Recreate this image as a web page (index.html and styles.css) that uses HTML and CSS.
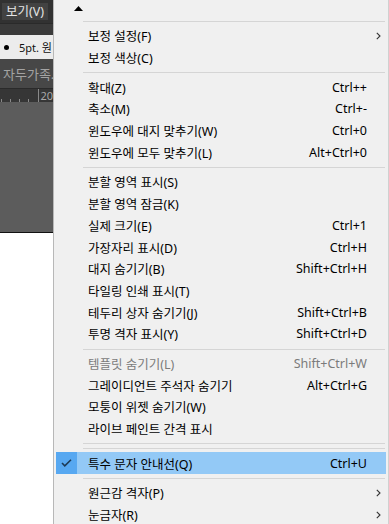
FILE: index.html
```html
<!DOCTYPE html>
<html lang="ko">
<head>
  <meta charset="UTF-8">
  <meta name="viewport" content="width=device-width, initial-scale=1.0">
  <link rel="stylesheet" href="styles.css">
</head>
<body>

<div class="screen">
  <!-- app behind the menu -->
  <div class="app">
    <div class="menubar"><span class="menubar-item">보기(V)</span></div>
    <div class="strip"></div>
    <div class="ctrl-row"><span class="dot"></span><span class="ctrl-text">5pt. 원</span></div>
    <div class="doc-tab">자두가족.</div>
    <div class="ruler">
      <span class="tick"></span>
      <span class="tick"></span>
      <span class="tick"></span>
      <span class="tick"></span>
      <span class="tick big"></span>
      <span class="ruler-num">20</span>
    </div>
    <div class="canvas"></div>
    <div class="paper"></div>
  </div>

  <!-- view menu -->
  <div class="menu">
    <div class="scroll-up">
      <svg width="9" height="5" viewBox="0 0 9 5"><polygon points="0,5 4.5,0 9,5" fill="#000"/></svg>
    </div>
    <div class="sep"></div>

    <div class="item"><span class="check"></span><span class="label">보정 설정(F)</span><span class="key"></span><span class="sub"><svg width="5" height="8" viewBox="0 0 5 8"><polyline points="0.8,0.8 4,4 0.8,7.2" fill="none" stroke="#333" stroke-width="1.1"/></svg></span></div>
    <div class="item"><span class="check"></span><span class="label">보정 색상(C)</span><span class="key"></span><span class="sub"></span></div>
    <div class="sep"></div>

    <div class="item"><span class="check"></span><span class="label">확대(Z)</span><span class="key">Ctrl++</span><span class="sub"></span></div>
    <div class="item"><span class="check"></span><span class="label">축소(M)</span><span class="key">Ctrl+-</span><span class="sub"></span></div>
    <div class="item"><span class="check"></span><span class="label">윈도우에 대지 맞추기(W)</span><span class="key">Ctrl+0</span><span class="sub"></span></div>
    <div class="item"><span class="check"></span><span class="label">윈도우에 모두 맞추기(L)</span><span class="key">Alt+Ctrl+0</span><span class="sub"></span></div>
    <div class="sep"></div>

    <div class="item"><span class="check"></span><span class="label">분할 영역 표시(S)</span><span class="key"></span><span class="sub"></span></div>
    <div class="item"><span class="check"></span><span class="label">분할 영역 잠금(K)</span><span class="key"></span><span class="sub"></span></div>
    <div class="item"><span class="check"></span><span class="label">실제 크기(E)</span><span class="key">Ctrl+1</span><span class="sub"></span></div>
    <div class="item"><span class="check"></span><span class="label">가장자리 표시(D)</span><span class="key">Ctrl+H</span><span class="sub"></span></div>
    <div class="item"><span class="check"></span><span class="label">대지 숨기기(B)</span><span class="key">Shift+Ctrl+H</span><span class="sub"></span></div>
    <div class="item"><span class="check"></span><span class="label">타일링 인쇄 표시(T)</span><span class="key"></span><span class="sub"></span></div>
    <div class="item"><span class="check"></span><span class="label">테두리 상자 숨기기(J)</span><span class="key">Shift+Ctrl+B</span><span class="sub"></span></div>
    <div class="item"><span class="check"></span><span class="label">투명 격자 표시(Y)</span><span class="key">Shift+Ctrl+D</span><span class="sub"></span></div>
    <div class="sep"></div>

    <div class="item disabled"><span class="check"></span><span class="label">템플릿 숨기기(L)</span><span class="key">Shift+Ctrl+W</span><span class="sub"></span></div>
    <div class="item"><span class="check"></span><span class="label">그레이디언트 주석자 숨기기</span><span class="key">Alt+Ctrl+G</span><span class="sub"></span></div>
    <div class="item"><span class="check"></span><span class="label">모퉁이 위젯 숨기기(W)</span><span class="key"></span><span class="sub"></span></div>
    <div class="item"><span class="check"></span><span class="label">라이브 페인트 간격 표시</span><span class="key"></span><span class="sub"></span></div>
    <div class="sep"></div>
    <div class="sep"></div>

    <div class="item checked"><span class="check"><svg width="11" height="8" viewBox="0 0 11 8"><polyline points="1,4 3.8,6.8 10,0.8" fill="none" stroke="#1d3a56" stroke-width="1.6"/></svg></span><span class="label">특수 문자 안내선(Q)</span><span class="key">Ctrl+U</span><span class="sub"></span></div>
    <div class="sep"></div>

    <div class="item"><span class="check"></span><span class="label">원근감 격자(P)</span><span class="key"></span><span class="sub"><svg width="5" height="8" viewBox="0 0 5 8"><polyline points="0.8,0.8 4,4 0.8,7.2" fill="none" stroke="#333" stroke-width="1.1"/></svg></span></div>
    <div class="item"><span class="check"></span><span class="label">눈금자(R)</span><span class="key"></span><span class="sub"><svg width="5" height="8" viewBox="0 0 5 8"><polyline points="0.8,0.8 4,4 0.8,7.2" fill="none" stroke="#333" stroke-width="1.1"/></svg></span></div>
  </div>
</div>

</body>
</html>
```

FILE: styles.css
```css
body {
  margin: 0;
  font-family: "Noto Sans", "Noto Sans CJK KR", sans-serif;
  background: #fff;
  overflow: hidden;
}

.screen {
  display: flex;
  width: 389px;
  height: 524px;
  overflow: hidden;
}

/* app area on the left */
.app {
  width: 53px;
  flex-shrink: 0;
  display: flex;
  flex-direction: column;
  overflow: hidden;
  white-space: nowrap;
}

.menubar {
  height: 23px;
  background-color: #323232;
  display: flex;
  align-items: center;
}

.menubar-item {
  margin-left: 2px;
  padding: 0 4px;
  height: 17px;
  line-height: 17px;
  background-color: #424242;
  color: #e4e4e4;
  font-size: 12.5px;
}

.strip {
  height: 11px;
  background-color: #3a3a3a;
  border-top: 1px solid #2a2a2a;
}

.ctrl-row {
  height: 24px;
  background-color: #ececec;
  display: flex;
  align-items: center;
  color: #111;
  font-size: 11px;
}

.dot {
  width: 5px;
  height: 5px;
  border-radius: 50%;
  background-color: #000;
  margin: 0 10px 0 4px;
}

.doc-tab {
  height: 29px;
  background-color: #474747;
  color: #a3a3a3;
  font-size: 13px;
  line-height: 31px;
  padding-left: 3px;
}

.ruler {
  height: 13px;
  background-color: #363636;
  border-top: 1px solid #2a2a2a;
  display: flex;
  align-items: flex-end;
  color: #a8a8a8;
  font-size: 11px;
}

.tick {
  width: 1px;
  height: 3px;
  background-color: #8a8a8a;
  margin-right: 9px;
}

.tick:first-child {
  margin-left: 1px;
}

.tick.big {
  height: 13px;
  margin-left: 1px;
  margin-right: 2px;
}

.ruler-num {
  line-height: 12px;
}

.canvas {
  height: 130px;
  background-color: #5c5c5c;
  border-bottom: 1px solid #111;
}

.paper {
  flex: 1;
  background-color: #fff;
}

/* menu */
.menu {
  flex: 1;
  background-color: #f0f0f0;
  border-left: 1px solid #b8b8b8;
  border-right: 1px solid #d0d0d0;
  font-size: 12.5px;
  color: #000;
}

.scroll-up {
  height: 17px;
  padding-left: 20px;
  display: flex;
  align-items: center;
}

.sep {
  height: 1px;
  margin: 4px 3px 3px 29px;
  background-color: #d5d5d5;
}

.item {
  height: 21.7px;
  margin: 0 2px;
  display: grid;
  grid-template-columns: 22px 1fr auto 19px;
  align-items: center;
}

.check {
  height: 100%;
  display: flex;
  align-items: center;
  justify-content: center;
}

.label {
  padding-left: 10px;
  white-space: nowrap;
}

.key {
  white-space: nowrap;
}

.sub {
  display: flex;
  align-items: center;
  justify-content: center;
  padding-left: 3px;
}

.item.disabled {
  color: #7b7b7b;
}

.item.checked {
  background-color: #93c9f6;
}

.item.checked .check {
  background-color: #57a8f1;
  margin-right: 1px;
}
```
